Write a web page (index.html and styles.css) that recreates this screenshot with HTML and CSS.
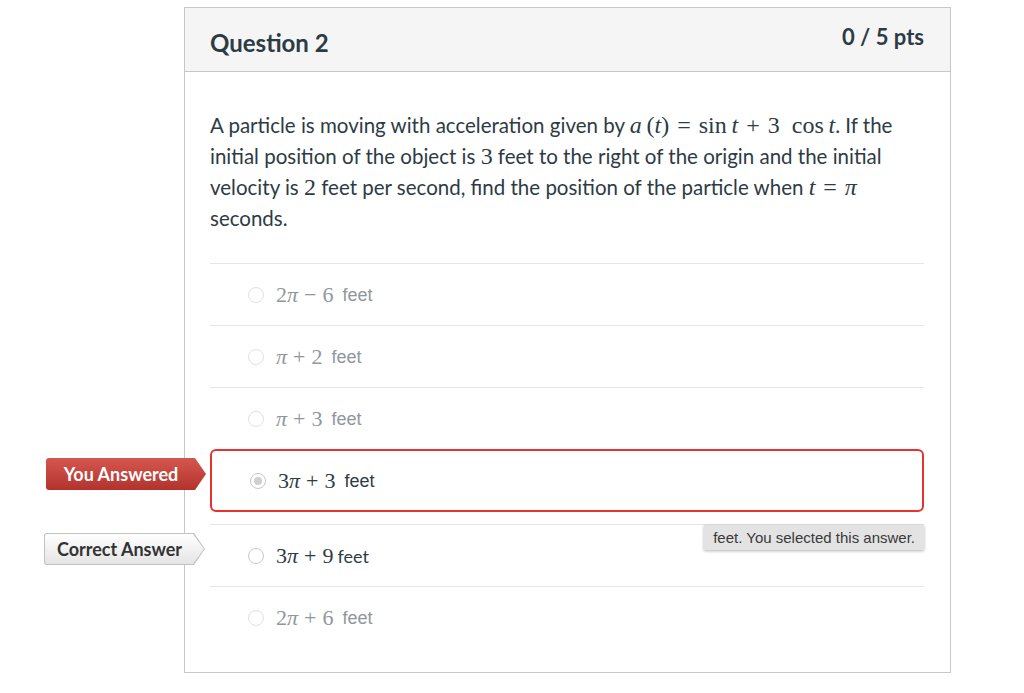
FILE: index.html
```html
<!DOCTYPE html>
<html>
<head>
<meta charset="utf-8">
<link rel="stylesheet" href="styles.css">
</head>
<body>
<div class="page">
  <div class="card">
    <div class="head">
      <h2 class="title">Question 2</h2>
      <div class="pts">0 / 5 pts</div>
    </div>
    <div class="body">
      <p class="q">A particle is moving with acceleration given by <span class="m"><i>a</i>&#8201;(<i>t</i>)<span class="op">=</span>sin&#8201;<i>t</i><span class="op">+</span>3&#8194;cos&#8201;<i>t</i></span>. If the<br>initial position of the object is <span class="m">3</span> feet to the right of the origin and the initial<br>velocity is <span class="m">2</span> feet per second, find the position of the particle when <span class="m"><i>t</i><span class="op">=</span><i>π</i></span><br>seconds.</p>
      <div class="answers">
        <div class="ans faded"><span class="radio"></span><span class="m">2<i>π</i><span class="op">−</span>6</span><span class="unit">feet</span></div>
        <div class="ans faded"><span class="radio"></span><span class="m"><i>π</i><span class="op">+</span>2</span><span class="unit">feet</span></div>
        <div class="ans faded"><span class="radio"></span><span class="m"><i>π</i><span class="op">+</span>3</span><span class="unit">feet</span></div>
        <div class="ans selected">
          <span class="tag wrong"><span class="tag-text">You Answered</span></span>
          <span class="radio checked"></span><span class="m">3<i>π</i><span class="op">+</span>3</span><span class="unit">feet</span>
        </div>
        <div class="ans correct">
          <span class="tag right"><span class="tag-text">Correct Answer</span></span>
          <span class="radio"></span><span class="m">3<i>π</i><span class="op">+</span>9</span><span class="unit2">feet</span>
          <div class="tip">feet. You selected this answer.</div>
        </div>
        <div class="ans faded"><span class="radio"></span><span class="m">2<i>π</i><span class="op">+</span>6</span><span class="unit">feet</span></div>
      </div>
    </div>
  </div>
</div>
</body>
</html>
```

FILE: styles.css
```css
html, body {
  margin: 0;
  padding: 0;
  background: #fff;
}
body {
  font-family: Lato, "Open Sans", sans-serif;
  color: #2d3b45;
}
.page {
  padding-top: 7px;
  padding-left: 184px;
}
.card {
  width: 765px;
  border: 1px solid #c4c8cb;
  background: #fff;
}
.head {
  height: 63px;
  background: #f5f5f5;
  border-bottom: 1px solid #c4c8cb;
  display: flex;
  justify-content: space-between;
  align-items: flex-start;
  padding: 0 26px 0 25px;
}
.title {
  margin: 21px 0 0 0;
  font-size: 24px;
  line-height: 1.2;
  font-weight: 700;
  color: #2d3b45;
}
.pts {
  margin-top: 16px;
  font-size: 22px;
  line-height: 1.2;
  font-weight: 700;
  color: #2d3b45;
}
.body {
  padding: 38px 26px 24px 25px;
}
.q {
  margin: 0;
  font-size: 20.5px;
  line-height: 31px;
  white-space: nowrap;
}
.q .m {
  font-family: "Liberation Serif", "DejaVu Serif", serif;
  font-size: 24px;
  line-height: 20px;
}
.q .op {
  margin: 0 8px;
}
.m {
  font-family: "Liberation Serif", "DejaVu Serif", serif;
  font-size: 22px;
}
.m i {
  font-style: italic;
}
.op {
  margin: 0 6px;
}
.answers {
  margin-top: 29px;
}
.ans {
  position: relative;
  height: 61px;
  border-top: 1px solid #e6e6e6;
  display: flex;
  align-items: center;
  padding-left: 38px;
  padding-top: 1px;
  box-sizing: content-box;
}
.ans .m {
  font-size: 22px;
}
.ans.faded .m,
.ans.faded .unit {
  color: #90979c;
}
.unit {
  font-family: "Liberation Sans", Arial, sans-serif;
  font-size: 18px;
  margin-left: 9px;
}
.unit2 {
  font-family: Lato, sans-serif;
  font-size: 18px;
  margin-left: 4px;
}
.radio {
  width: 14px;
  height: 14px;
  border: 1px solid #c8c8c8;
  border-radius: 50%;
  background: #fff;
  margin-right: 12px;
  flex: none;
}
.faded .radio {
  border-color: #e0e0e0;
}
.radio.checked {
  position: relative;
}
.radio.checked::after {
  content: "";
  position: absolute;
  left: 3px;
  top: 3px;
  width: 8px;
  height: 8px;
  border-radius: 50%;
  background: #cfcfcf;
}
.ans.selected {
  height: 58px;
  border: 2px solid #e8322d;
  border-radius: 6px;
  padding-left: 38px;
  margin-bottom: 12px;
  color: #2d3b45;
}
.ans.correct {
  color: #2d3b45;
}
.ans.faded {
  height: 60px;
}
.ans.correct {
  height: 60px;
}
.tag {
  position: absolute;
  height: 32px;
  width: 160px;
  left: -166px;
  top: 7px;
  display: flex;
  align-items: center;
  justify-content: center;
  box-sizing: border-box;
  padding-right: 10px;
  font-family: Lato, sans-serif;
  font-weight: 700;
  font-size: 18px;
  clip-path: polygon(0 0, calc(100% - 11px) 0, 100% 50%, calc(100% - 11px) 100%, 0 100%);
  border-radius: 3px 0 0 3px;
}
.tag.wrong {
  color: #fff;
  background: linear-gradient(#d4574f, #b3332c);
}
.tag.right {
  top: 8px;
  left: -166px;
  width: 161px;
  color: #333;
  background: #c2c2c2;
}
.tag.right::before {
  content: "";
  position: absolute;
  left: 1px;
  top: 1px;
  right: 1px;
  bottom: 1px;
  background: linear-gradient(#ffffff, #e4e4e4);
  clip-path: polygon(0 0, calc(100% - 11px) 0, 100% 50%, calc(100% - 11px) 100%, 0 100%);
  border-radius: 2px 0 0 2px;
}
.tag-text {
  position: relative;
}
.tip {
  position: absolute;
  right: 0;
  top: 0;
  height: 25px;
  padding: 0 9px;
  display: flex;
  align-items: center;
  background: #e3e3e3;
  color: #3a3a3a;
  font-family: "Liberation Sans", Arial, sans-serif;
  font-size: 15px;
  box-shadow: 0 1px 3px rgba(0, 0, 0, 0.3);
}
```
